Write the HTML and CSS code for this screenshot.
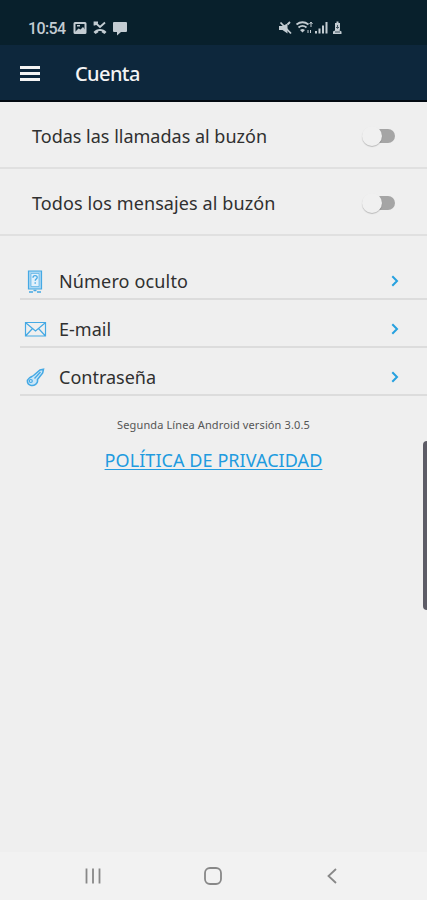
FILE: index.html
```html
<!DOCTYPE html>
<html lang="es">
<head>
    <meta charset="UTF-8">
    <meta name="viewport" content="width=device-width, initial-scale=1.0">
    <title>Cuenta</title>
    <link rel="stylesheet" href="styles.css">
</head>
<body>

    <div class="status-bar">
        <span class="time">10:54</span>
        <svg class="status-left" width="56" height="16" viewBox="0 0 56 16">
            <!-- Imagen -->
            <path d="M2 2h10a1.500 1.500 0 0 1 1.500 1.500v9a1.500 1.500 0 0 1-1.500 1.500h-10a1.500 1.500 0 0 1-1.500-1.500v-9a1.500 1.500 0 0 1 1.500-1.500zM2.500 4v7.500h9V4z" fill-rule="evenodd"/>
            <path d="M3 11l2.500-2.500 2 1L10 7l2 2.500V12H3zM4 5h3v1.500H4z"/>
            <!-- Llamada perdida -->
            <path d="M22.500 3l4.500 4 5-4.500M21.500 5.500v-3H25" class="line"/>
            <path d="M20.500 12c3-4 10-4 13 0l-2 2-2.800-1.700v-1.300h-3.400v1.300L22.500 14z"/>
            <!-- Mensaje -->
            <path d="M41 2h12a1 1 0 0 1 1 1v8a1 1 0 0 1-1 1h-5l-4 3.500V12h-3a1 1 0 0 1-1-1V3a1 1 0 0 1 1-1z"/>
        </svg>
        <svg class="status-right" width="66" height="16" viewBox="0 0 66 16">
            <!-- Silencio -->
            <path d="M1 6h3.500l5-2.500v10L4.500 10H1z"/>
            <path d="M2.500 2.500l10.500 11M9.500 4.500l2.500-2.500" class="line"/>
            <!-- Wifi -->
            <path d="M18.500 4.500c4-3 8-3 12 0M20.500 7.500c3-2.500 5-2.500 8 0" class="line"/>
            <path d="M22 10c1.800-1.300 3.200-1.300 5 0l-2.500 2.500z"/>
            <path d="M33 2v5M31.500 4L33 2l1.500 2M30 10v3M32.500 10v3" class="thin"/>
            <!-- Cobertura -->
            <path d="M37 11h2v2.500h-2zM40.500 8.500h2v5h-2zM44 5.500h2v8h-2zM47.500 2h2v11.500h-2z"/>
            <!-- Bateria -->
            <path d="M57 3h1.500V1.500h2V3H62v6l-.5 1.500 2 1v2.500h-8.500v-2.500l2-1L57 9z"/>
            <path d="M59.500 5v3M58 7l1.500 1.500L61 7M57 12h5" class="dark"/>
        </svg>
    </div>

    <header class="app-bar">
        <div class="menu"><i></i><i></i><i></i></div>
        <h1>Cuenta</h1>
    </header>

    <main>
        <div class="switch-row">
            <span class="calls">Todas las llamadas al buzón</span>
            <span class="switch"></span>
        </div>
        <div class="switch-row">
            <span class="messages">Todos los mensajes al buzón</span>
            <span class="switch"></span>
        </div>

        <div class="options">
            <div class="option">
                <svg class="option-icon" width="24" height="26" viewBox="0 0 24 26">
                    <path d="M5.500 3h13v18h-13z" fill="#a9d6f2"/>
                    <path d="M8 5.500h8v13H8z" class="screen"/>
                    <path d="M10 9.700c0-2.800 4.200-2.600 4.200-.3 0 1.700-2 1.700-2 3.400M12.200 14.300v1.400" stroke-width="1.300"/>
                    <path d="M6 24h4M14 24h4M10.500 22.500h3" stroke-width="1.500"/>
                </svg>
                <span class="number">Número oculto</span>
                <svg class="chevron" width="8" height="12" viewBox="0 0 8 12"><path d="M1.300 1.300L6 6l-4.700 4.700"/></svg>
            </div>
            <div class="option">
                <svg class="option-icon" width="24" height="26" viewBox="0 0 24 26">
                    <path d="M2.500 6.500h20v13.500h-20zM3 7l9.500 8L22 7M3 19.500l6.500-7M22 19.500l-6.500-7"/>
                </svg>
                <span class="email">E-mail</span>
                <svg class="chevron" width="8" height="12" viewBox="0 0 8 12"><path d="M1.300 1.300L6 6l-4.700 4.700"/></svg>
            </div>
            <div class="option">
                <svg class="option-icon" width="24" height="26" viewBox="0 0 24 26">
                    <path d="M10.500 11.500L17 6l3.500-.8-.8 3.800-5.200 6.500c.8 4.500-3.500 6.500-7 5.700-3.800-1.200-4-5.200-1.200-7.200 1.500-1 2.700-1.500 4.200-2.500z" fill="#cbe6f7" stroke-width="1.500"/>
                    <path d="M11.500 14.500l6-6.500" stroke-width="1.300"/>
                    <circle cx="7.800" cy="17" r="1.500"/>
                </svg>
                <span class="password">Contraseña</span>
                <svg class="chevron" width="8" height="12" viewBox="0 0 8 12"><path d="M1.300 1.300L6 6l-4.700 4.700"/></svg>
            </div>
        </div>

        <p class="version">Segunda Línea Android versión 3.0.5</p>
        <a class="privacy" href="#">POLÍTICA DE PRIVACIDAD</a>
    </main>

    <div class="edge-panel"></div>

    <nav class="nav-bar">
        <svg width="18" height="18" viewBox="0 0 18 18"><path d="M2.500 1.500v15M9 1.500v15M15.500 1.500v15"/></svg>
        <svg width="18" height="18" viewBox="0 0 18 18"><rect x="1" y="1" width="16" height="16" rx="5"/></svg>
        <svg width="18" height="18" viewBox="0 0 18 18"><path d="M13 2L5.500 9l7.500 7"/></svg>
    </nav>

</body>
</html>
```

FILE: styles.css
```css
* {
    box-sizing: border-box;
}
body {
    margin: 0;
    height: 900px;
    display: flex;
    flex-direction: column;
    position: relative;
    overflow: hidden;
    background-color: #efefef;
    color: #303030;
    font-family: "Noto Sans", "Open Sans", sans-serif;
}
.status-bar {
    height: 45px;
    padding: 11px 0 0 28px;
    display: flex;
    align-items: center;
    background-color: #08202c;
    color: #c3ccd2;
}
.time {
    width: 45px;
    font: 500 16px Roboto, sans-serif;
    letter-spacing: -0.6px;
}
.status-bar svg {
    fill: #c3ccd2;
}
.status-bar .line, .status-bar .thin, .status-bar .dark {
    fill: none;
    stroke: #c3ccd2;
    stroke-width: 1.8;
}
.status-bar .thin {
    stroke-width: 1;
}
.status-bar .dark {
    stroke: #40535e;
    stroke-width: 1;
}
.status-right {
    margin-left: 149px;
}
.app-bar {
    height: 57px;
    padding: 0 20px;
    display: flex;
    align-items: center;
    background-color: #0d273c;
    border-bottom: 2px solid #030a12;
    color: #f4f4f4;
}
.menu {
    width: 20px;
    margin: 2px 35px 0 0;
    display: flex;
    flex-direction: column;
    gap: 3px;
}
.menu i {
    height: 3px;
    background-color: #f4f4f4;
}
h1 {
    margin: 2px 0 0;
    font-size: 20px;
    font-weight: 500;
    line-height: 28px;
    letter-spacing: -0.6px;
}
main {
    flex: 1;
    display: flex;
    flex-direction: column;
}
.switch-row {
    height: 67px;
    padding: 2px 32px 0;
    display: flex;
    align-items: center;
    justify-content: space-between;
    border-bottom: 2px solid #e0e0e0;
    font-size: 18px;
}
.messages {
    letter-spacing: 0.1px;
}
.switch {
    width: 22px;
    height: 14px;
    position: relative;
    border-radius: 7px;
    background-color: #a5a5a5;
}
.switch::before {
    content: "";
    position: absolute;
    left: -11px;
    top: -3px;
    width: 20px;
    height: 20px;
    border-radius: 50%;
    background-color: #f0f0f0;
    box-shadow: 0 1px 1px rgba(0, 0, 0, 0.22);
}
.options {
    padding: 16px 0 0 20px;
}
.option {
    height: 48px;
    padding: 11px 28px 0 3px;
    display: flex;
    align-items: center;
    border-bottom: 2px solid #dcdcdc;
    font-size: 18px;
}
.number {
    letter-spacing: 0.15px;
}
.option-icon {
    margin-right: 12px;
    fill: none;
    stroke: #45a9e4;
    stroke-width: 1.2;
}
.screen {
    fill: #e2f1fb;
    stroke-width: 0.6;
}
.chevron {
    margin-left: auto;
    fill: none;
    stroke: #26a1df;
    stroke-width: 2;
}
.version {
    margin: 21px 0 0;
    text-align: center;
    font-size: 11px;
    line-height: 16px;
    letter-spacing: 0.12px;
    color: #555;
}
.privacy {
    align-self: center;
    margin-top: 14px;
    font-size: 18px;
    line-height: 26px;
    letter-spacing: 0.07px;
    color: #219bdf;
    text-decoration-thickness: 1px;
    text-underline-offset: 2px;
}
.edge-panel {
    position: absolute;
    right: -4px;
    top: 441px;
    width: 8px;
    height: 169px;
    border-radius: 4px;
    background-color: #5d5c66;
}
.nav-bar {
    height: 48px;
    padding: 0 86px 0 84px;
    display: flex;
    align-items: center;
    justify-content: space-between;
    background-color: #f2f2f2;
}
.nav-bar svg {
    fill: none;
    stroke: #888;
    stroke-width: 1.8;
}
```
